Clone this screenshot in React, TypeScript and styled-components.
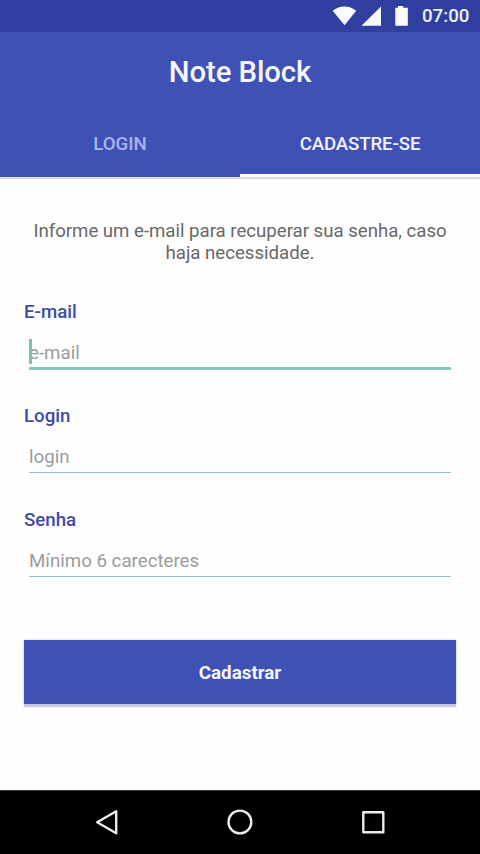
import styled, { createGlobalStyle } from 'styled-components'

const GlobalStyle = createGlobalStyle`
  * {
    box-sizing: border-box;
  }

  body {
    margin: 0;
    background: white;
    font-family: Roboto, sans-serif;
  }
`

const Screen = styled.div`
  display: flex;
  flex-direction: column;
  width: 480px;
  height: 854px;
  overflow: hidden;
  background: #fefefe;
`

const StatusBar = styled.div`
  display: flex;
  align-items: center;
  justify-content: flex-end;
  flex: none;
  height: 32px;
  padding-right: 11px;
  background: #303f9f;
  color: #eef1ff;
`

const Clock = styled.span`
  width: 47px;
  margin-left: 14px;
  font-size: 18.7px;
  font-weight: 500;
  line-height: 34px;
  white-space: nowrap;
`

const Header = styled.header`
  flex: none;
  height: 147px;
  background: #3f51b5;
  border-bottom: 2px solid #dcdde2;
`

const Title = styled.h1`
  margin: 0;
  height: 77px;
  color: #f5f7ff;
  font-size: 29.3px;
  font-weight: 500;
  line-height: 81px;
  letter-spacing: -0.1px;
  text-align: center;
`

const Tabs = styled.nav`
  display: grid;
  grid-template-columns: 1fr 1fr;
  height: 68px;
`

const Tab = styled.button<{ $active?: boolean }>`
  padding: 5px 0 0;
  border: 0;
  border-bottom: 3px solid ${p => (p.$active ? '#ffffff' : 'transparent')};
  background: none;
  color: ${p => (p.$active ? '#f0f3ff' : '#a9b4ee')};
  font: 500 18.7px Roboto, sans-serif;
  letter-spacing: ${p => (p.$active ? '-0.15px' : '0')};
`

const Form = styled.form`
  display: flex;
  flex-direction: column;
  flex: 1;
  padding: 41px 24px 0;
`

const Hint = styled.p`
  margin: 0 0 37px;
  color: #686868;
  font-size: 18.65px;
  line-height: 22px;
  letter-spacing: -0.02px;
  text-align: center;
`

const Field = styled.div`
  height: 104px;
`

const Label = styled.label`
  display: block;
  height: 21px;
  color: #3f4ba8;
  font-size: 18.7px;
  font-weight: 500;
  line-height: 22px;
`

const InputBox = styled.div<{ $focused?: boolean }>`
  position: relative;
  height: ${p => (p.$focused ? 48 : 47)}px;
  margin: 0 5px;
  padding-top: 9px;
  border-bottom: ${p => (p.$focused ? '3px solid #87c4ba' : '1px solid #8dc3c5')};
`

const Input = styled.input`
  display: block;
  width: 100%;
  height: 26px;
  margin-top: 9px;
  padding: 0;
  border: 0;
  outline: 0;
  background: none;
  font: 400 18.7px Roboto, sans-serif;

  &::placeholder {
    color: #9c9c9c;
    opacity: 1;
  }
`

const Caret = styled.span`
  position: absolute;
  top: 17px;
  left: 0;
  width: 3px;
  height: 25px;
  background: #80bdb4;
`

const Submit = styled.button`
  height: 64px;
  margin-top: 27px;
  padding: 1px 0 0;
  border: 0;
  background: #3f51b5;
  box-shadow: 0 3px 1px #c6c8dc, 0 0 2px #b9bdd9;
  color: #f5f7ff;
  font: 700 18.8px Roboto, sans-serif;
`

const NavBar = styled.footer`
  display: flex;
  justify-content: center;
  flex: none;
  height: 64px;
  border-top: 1px solid #3a3a3a;
  background: black;
`

const fields = [
  { id: 'email', label: 'E-mail', placeholder: 'e-mail', focused: true },
  { id: 'login', label: 'Login', placeholder: 'login', focused: false },
  { id: 'senha', label: 'Senha', placeholder: 'Mínimo 6 carecteres', focused: false },
]

function StatusIcons() {
  return (
    <svg width="78" height="32" viewBox="0 0 78 32" fill="#fafbff">
      <path d="M2.7 10.8C9.5 5 19.3 5 26.2 10.8L14.5 25.2z" />
      <path d="M51 6.4V25.7H31.5z" />
      <path d="M68 6h5.2v1.8H77.8V25.8H65.3V7.8H68z" />
    </svg>
  )
}

function NavIcons() {
  return (
    <svg width="480" height="63" viewBox="0 0 480 63" fill="none" stroke="#ececec" strokeWidth="2.4" strokeLinejoin="round">
      <path d="M116.2 20.2V42.2L97.2 31.2z" />
      <circle cx="239.9" cy="31" r="11.4" />
      <path d="M363.3 21.2h20v20h-20z" />
    </svg>
  )
}

export default function App() {
  return (
    <>
      <GlobalStyle />
      <Screen>
        <StatusBar>
          <StatusIcons />
          <Clock>07:00</Clock>
        </StatusBar>
        <Header>
          <Title>Note Block</Title>
          <Tabs>
            <Tab>LOGIN</Tab>
            <Tab $active>CADASTRE-SE</Tab>
          </Tabs>
        </Header>
        <Form>
          <Hint>Informe um e-mail para recuperar sua senha, caso haja necessidade.</Hint>
          {fields.map(({ id, label, placeholder, focused }) => (
            <Field key={id}>
              <Label htmlFor={id}>{label}</Label>
              <InputBox $focused={focused}>
                {focused && <Caret />}
                <Input id={id} placeholder={placeholder} />
              </InputBox>
            </Field>
          ))}
          <Submit type="button">Cadastrar</Submit>
        </Form>
        <NavBar>
          <NavIcons />
        </NavBar>
      </Screen>
    </>
  )
}
